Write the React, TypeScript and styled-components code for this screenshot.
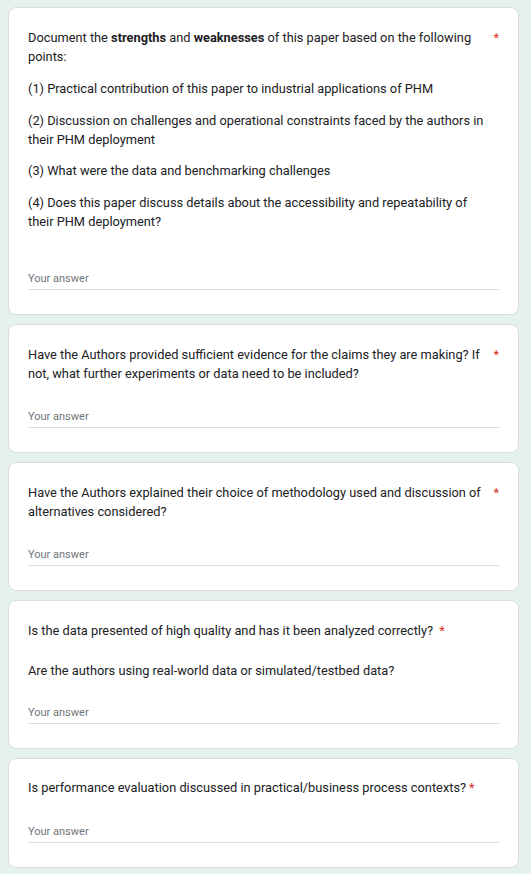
import React from "react";
import styled, { createGlobalStyle } from "styled-components";

const GlobalStyle = createGlobalStyle`
  html, body {
    margin: 0;
    padding: 0;
    background: #e4f1ef;
  }
  body {
    font-family: Roboto, "Liberation Sans", Arial, sans-serif;
    -webkit-font-smoothing: antialiased;
  }
`;

const Page = styled.main`
  display: flex;
  flex-direction: column;
  gap: 9px;
  padding: 7px 12px 8px 8px;
`;

const Card = styled.section`
  background: #ffffff;
  border: 1px solid #dadce0;
  border-radius: 8px;
  padding: 19.5px 19px 24px 19px;
  display: flex;
  flex-direction: column;
`;

const TitleRow = styled.div`
  display: flex;
  align-items: flex-start;
`;

const TitleText = styled.div`
  flex: 0 1 auto;
  font-size: 12.8px;
  line-height: 19px;
  color: #202124;
  font-weight: 400;
  white-space: pre-wrap;

  b {
    font-weight: 700;
  }
`;

const Asterisk = styled.span`
  flex: none;
  color: #d93025;
  font-size: 12.8px;
  line-height: 19px;
  padding-left: 3px;
`;

const Description = styled.div<{ $top: number; $tail: number }>`
  display: flex;
  flex-direction: column;
  gap: 12.5px;
  padding-right: 10px;
  margin-top: ${(p) => p.$top}px;
  margin-bottom: ${(p) => p.$tail}px;
`;

const Paragraph = styled.p`
  margin: 0;
  font-size: 12.8px;
  line-height: 19px;
  color: #202124;
`;

const AnswerField = styled.div<{ $gap: number }>`
  margin-top: ${(p) => p.$gap}px;
  padding-bottom: 3px;
  border-bottom: 1px solid #dadce0;
  font-size: 11px;
  line-height: 14px;
  color: #70757a;
`;

type Q = {
  title: React.ReactNode;
  paragraphs?: string[];
  top?: number;
  tail?: number;
  gap: number;
};

const questions: Q[] = [
  {
    title: (
      <>
        Document the <b>strengths</b> and <b>weaknesses</b> of this paper based on the following points:
      </>
    ),
    paragraphs: [
      "(1) Practical contribution of this paper to industrial applications of PHM",
      "(2) Discussion on challenges and operational constraints faced by the authors in their PHM deployment",
      "(3) What were the data and benchmarking challenges",
      "(4) Does this paper discuss details about the accessibility and repeatability of their PHM deployment?",
    ],
    top: 13.5,
    tail: 14,
    gap: 27.5,
  },
  {
    title:
      "Have the Authors provided sufficient evidence for the claims they are making? If not, what further experiments or data need to be included?",
    gap: 27.5,
  },
  {
    title:
      "Have the Authors explained their choice of methodology used and discussion of alternatives considered?",
    gap: 27.5,
  },
  {
    title: "Is the data presented of high quality and has it been analyzed correctly? ",
    paragraphs: ["Are the authors using real-world data or simulated/testbed data?"],
    top: 21.5,
    tail: 0,
    gap: 25.5,
  },
  {
    title: "Is performance evaluation discussed in practical/business process contexts?",
    gap: 27.5,
  },
];

export default function App() {
  return (
    <>
      <GlobalStyle />
      <Page>
        {questions.map((q, i) => (
          <Card key={i}>
            <TitleRow>
              <TitleText>{q.title}</TitleText>
              <Asterisk aria-label="Required question">*</Asterisk>
            </TitleRow>
            {q.paragraphs && (
              <Description $top={q.top ?? 13.5} $tail={q.tail ?? 0}>
                {q.paragraphs.map((p, j) => (
                  <Paragraph key={j}>{p}</Paragraph>
                ))}
              </Description>
            )}
            <AnswerField $gap={q.gap}>Your answer</AnswerField>
          </Card>
        ))}
      </Page>
    </>
  );
}
